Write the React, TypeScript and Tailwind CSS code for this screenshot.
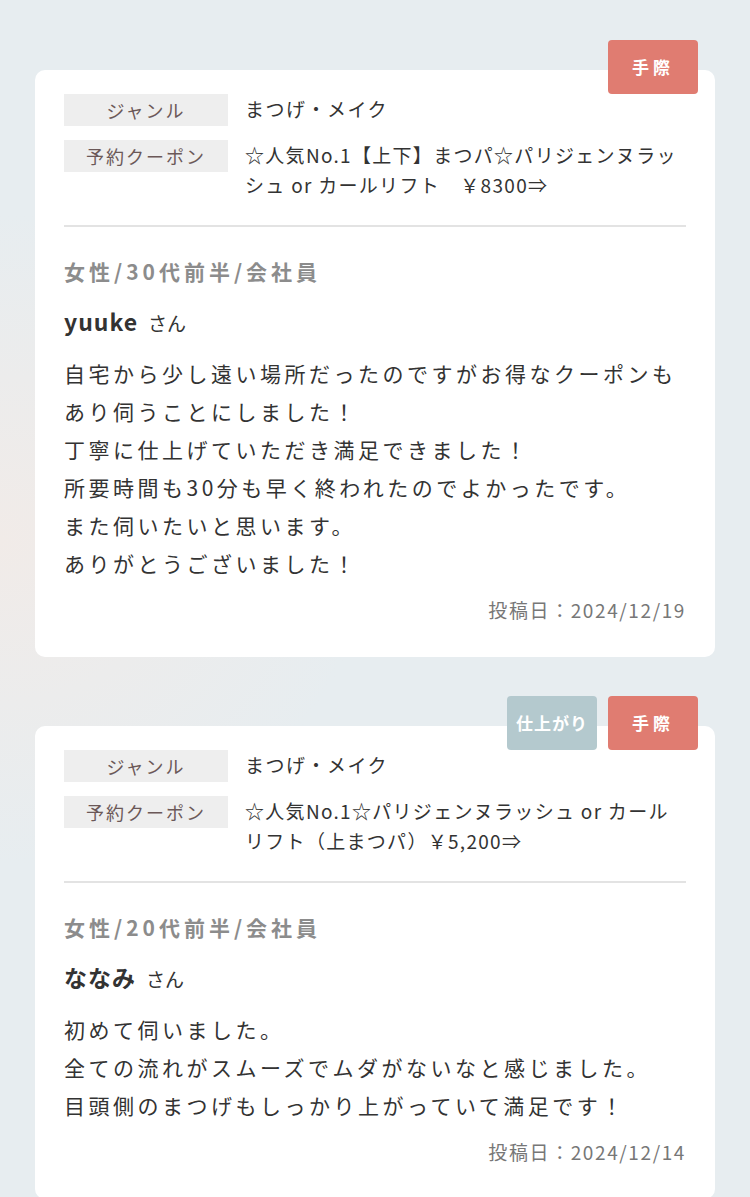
import React from 'react';

interface Review {
  badges: { label: string; color: string; tracking: string }[];
  genre: string;
  coupon: string[];
  profile: string;
  name: string;
  body: string[];
  date: string;
}

const reviews: Review[] = [
  {
    badges: [{ label: '手際', color: 'bg-[#e07c71]', tracking: 'tracking-[4px]' }],
    genre: 'まつげ・メイク',
    coupon: ['☆人気No.1【上下】まつパ☆パリジェンヌラッ', 'シュ or カールリフト　￥8300⇒'],
    profile: '女性/30代前半/会社員',
    name: 'yuuke',
    body: [
      '自宅から少し遠い場所だったのですがお得なクーポンも',
      'あり伺うことにしました！',
      '丁寧に仕上げていただき満足できました！',
      '所要時間も30分も早く終われたのでよかったです。',
      'また伺いたいと思います。',
      'ありがとうございました！',
    ],
    date: '投稿日：2024/12/19',
  },
  {
    badges: [
      { label: '仕上がり', color: 'bg-[#b4c9ce]', tracking: 'tracking-[1px]' },
      { label: '手際', color: 'bg-[#e07c71]', tracking: 'tracking-[4px]' },
    ],
    genre: 'まつげ・メイク',
    coupon: ['☆人気No.1☆パリジェンヌラッシュ or カール', 'リフト（上まつパ）￥5,200⇒'],
    profile: '女性/20代前半/会社員',
    name: 'ななみ',
    body: [
      '初めて伺いました。',
      '全ての流れがスムーズでムダがないなと感じました。',
      '目頭側のまつげもしっかり上がっていて満足です！',
    ],
    date: '投稿日：2024/12/14',
  },
];

const ReviewCard = ({ review }: { review: Review }) => (
  <div className="relative bg-white rounded-[10px] px-[29px] pt-[24px] pb-[32px]">
    {/* Badges */}
    <div className="absolute -top-[30px] right-[17px] flex gap-[11px]">
      {review.badges.map(b => (
        <div
          key={b.label}
          className={`${b.color} ${b.tracking} w-[90px] h-[54px] rounded-[4px] flex items-center justify-center text-white text-[17px] font-bold`}
        >
          {b.label}
        </div>
      ))}
    </div>

    {/* Meta table */}
    <div className="flex flex-col gap-[14px]">
      <div className="flex items-start">
        <div className="w-[164px] h-[32px] shrink-0 bg-[#eeeeee] text-[#6b5858] text-[18px] leading-[32px] tracking-[2px] text-center">
          ジャンル
        </div>
        <div className="ml-[17px] text-[19px] leading-[30px] tracking-[1.5px] text-[#333]">{review.genre}</div>
      </div>
      <div className="flex items-start">
        <div className="w-[164px] h-[32px] shrink-0 bg-[#eeeeee] text-[#6b5858] text-[18px] leading-[32px] tracking-[2px] text-center">
          予約クーポン
        </div>
        <div className="ml-[17px] text-[19px] leading-[30px] tracking-[1.3px] text-[#333] whitespace-nowrap">
          {review.coupon.map((l, i) => (
            <div key={i}>{l}</div>
          ))}
        </div>
      </div>
    </div>

    <div className="mt-[25px] h-[2px] bg-[#e3e3e3]" />

    <div className="mt-[29px] text-[21px] leading-[30px] font-bold tracking-[4px] text-[#8c8c8c]">{review.profile}</div>

    <div className="mt-[20px] leading-[30px] text-[#333]">
      <span className="text-[23px] font-bold tracking-[1px]">{review.name}</span>
      <span className="ml-[10px] text-[19px]">さん</span>
    </div>

    <div className="mt-[15px] text-[21px] leading-[38px] tracking-[3.5px] text-[#333] whitespace-nowrap">
      {review.body.map((l, i) => (
        <div key={i}>{l}</div>
      ))}
    </div>

    <div className="mt-[13px] text-right text-[19px] leading-[30px] tracking-[1.6px] text-[#777]">{review.date}</div>
  </div>
);

export default function App() {
  return (
    <div className="min-h-screen bg-[#e7edf0] bg-[radial-gradient(ellipse_at_0%_45%,#f1ebe8_0%,rgba(241,235,232,0)_35%)] font-['Noto_Sans_CJK_JP','Noto_Sans',sans-serif]">
      <div className="px-[35px] pt-[70px] flex flex-col gap-[69px]">
        {reviews.map((r, i) => (
          <ReviewCard key={i} review={r} />
        ))}
      </div>
    </div>
  );
}
